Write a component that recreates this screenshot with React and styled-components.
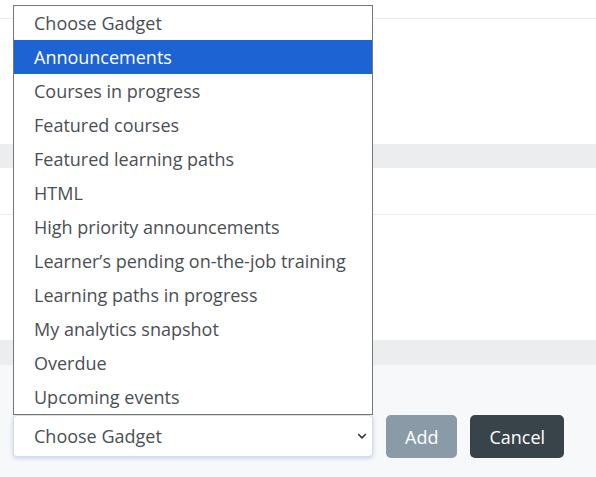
import React from "react";
import styled, { createGlobalStyle } from "styled-components";

const GlobalStyle = createGlobalStyle`
  html, body {
    margin: 0;
    padding: 0;
    background: #ffffff;
    font-family: "Open Sans", "Liberation Sans", sans-serif;
  }
`;

const options = [
  "Choose Gadget",
  "Announcements",
  "Courses in progress",
  "Featured courses",
  "Featured learning paths",
  "HTML",
  "High priority announcements",
  "Learner\u2019s pending on-the-job training",
  "Learning paths in progress",
  "My analytics snapshot",
  "Overdue",
  "Upcoming events",
];

export default function App() {
  return (
    <>
      <GlobalStyle />
      <Page>
        <Spacer $height={18} />
        <Divider />
        <Spacer $height={125} />
        <Band $height={24} />
        <Spacer $height={46} />
        <Divider />
        <Spacer $height={125} />
        <Band $height={25} />
        <Footer>
          <SelectBox>
            <span>Choose Gadget</span>
            <Chevron viewBox="0 0 16 16">
              <path d="M3.5 6l4.5 4.5L12.5 6" fill="none" stroke="#343a40" strokeWidth="2.2" strokeLinecap="round" strokeLinejoin="round" />
            </Chevron>
          </SelectBox>
          <Button $bg="#8a9ba7">Add</Button>
          <Button $bg="#38434a">Cancel</Button>
        </Footer>

        <OptionList>
          {options.map((o, i) => (
            <Option key={o} $active={i === 1}>
              {o}
            </Option>
          ))}
        </OptionList>
      </Page>
    </>
  );
}

const Page = styled.div`
  position: relative;
  width: 596px;
  height: 477px;
  display: flex;
  flex-direction: column;
  overflow: hidden;
`;

const Spacer = styled.div`
  height: ${(p) => p.$height}px;
  flex-shrink: 0;
`;

const Divider = styled.div`
  height: 1px;
  background: #e9ebed;
  flex-shrink: 0;
`;

const Band = styled.div`
  height: ${(p) => p.$height}px;
  background: #ebedef;
  flex-shrink: 0;
`;

const Footer = styled.div`
  flex: 1;
  background: #f7f8f9;
  display: flex;
  align-items: flex-start;
  gap: 13px;
  padding: 50px 0 0 13px;
`;

const SelectBox = styled.div`
  box-sizing: border-box;
  width: 360px;
  height: 42px;
  border: 1px solid #d6dde3;
  border-radius: 4px;
  background: #ffffff;
  box-shadow: 0 1px 4px rgba(120, 160, 220, 0.45);
  display: flex;
  align-items: center;
  justify-content: space-between;
  padding: 0 4px 0 20px;
  font-size: 18px;
  color: #4a4f55;
`;

const Chevron = styled.svg`
  width: 12px;
  height: 12px;
`;

const Button = styled.button`
  box-sizing: border-box;
  height: 43px;
  padding: 0 19px;
  border: none;
  border-radius: 5px;
  background: ${(p) => p.$bg};
  color: #ffffff;
  font-family: "Open Sans", "Liberation Sans", sans-serif;
  font-size: 18px;
`;

const OptionList = styled.ul`
  position: absolute;
  left: 13px;
  top: 5px;
  box-sizing: border-box;
  width: 360px;
  margin: 0;
  padding: 0;
  list-style: none;
  background: #ffffff;
  border: 1px solid #767676;
`;

const Option = styled.li`
  height: 34px;
  line-height: 34px;
  padding-left: 20px;
  font-size: 18px;
  white-space: nowrap;
  color: ${(p) => (p.$active ? "#ffffff" : "#4a4f55")};
  background: ${(p) => (p.$active ? "#1e63d3" : "transparent")};
`;
